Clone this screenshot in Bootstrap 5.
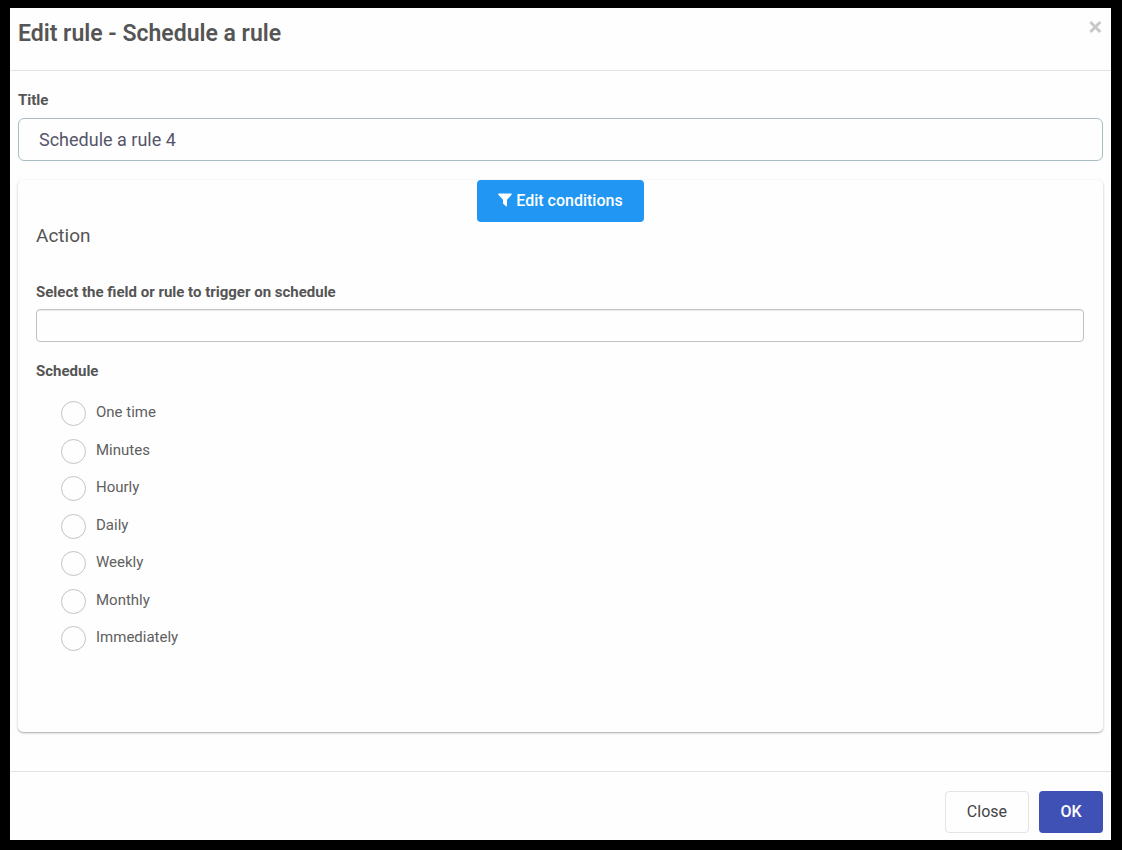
<!DOCTYPE html>
<html lang="en">
<head>
<meta charset="utf-8">
<meta name="viewport" content="width=device-width, initial-scale=1">
<title>Edit rule - Schedule a rule</title>
<link href="https://cdn.jsdelivr.net/npm/bootstrap@5.3.0/dist/css/bootstrap.min.css" rel="stylesheet">
<style>
  body { background: #000; color: #555; font-family: Roboto, "Liberation Sans", sans-serif; font-size: 15px; line-height: 20px; padding: 8px 11px 10px 10px; }
  .dialog { background: #fefefe; min-height: calc(100vh - 18px); }
  .dialog-head { padding: 10px 8px 20px; border-bottom: 1px solid #e1e3e3; }
  .dialog-title { font-size: 23px; line-height: 32px; font-weight: 600; }
  .dialog-close { width: 16px; height: 18px; color: #c8c8c8; line-height: 0; }
  .dialog-main { padding: 19px 8px 39px; }
  .dialog-foot { padding: 19px 8px 7px; gap: 10px; border-top: 1px solid #e1e3e3; }
  .field-name { font-weight: 700; }
  .title-box { height: 43px; margin: 8px 0 19px; padding: 0 20px; font-size: 18px; color: #55556a; border: 1px solid #a9bdc3; border-radius: 6px; background: #fefefe; }
  .panel { padding-bottom: 81px; border-radius: 5px; background: #fefefe; box-shadow: 0 1px 3px rgba(0,0,0,.2), 0 1px 1px rgba(0,0,0,.16); }
  .panel-body { padding: 0 19px 0 18px; }
  .action-title { font-size: 19px; line-height: 28px; margin-bottom: 32px; font-weight: 400; }
  .target-box { height: 33px; margin: 7px 0 19px; border: 1px solid #c2c2c2; border-radius: 4px; background: #fefefe; box-shadow: inset 0 1px 1px rgba(0,0,0,.08); }
  .btn { height: 42px; min-width: 64px; padding: 0 21px; font-size: 16px; line-height: 24px; border-radius: 4px; }
  .btn-filter { background: #2196f3; color: #fff; font-weight: 500; }
  .btn-filter svg { vertical-align: -1px; }
  .btn-plain { border: 1px solid #e4e4e4; color: #444; background: #fefefe; }
  .btn-accept { background: #3f51b5; color: #fff; font-weight: 500; }
  .choices { height: 250px; margin-top: 20px; padding-left: 25px; }
  .choice { gap: 10px; height: 25px; }
  .choice input { width: 25px; height: 25px; margin: 0; border: 1px solid #c4c4c4; background-color: #fefefe; }
  .choice label { line-height: 22px; color: #606060; }
</style>
</head>
<body>
<div class="dialog d-flex flex-column" role="dialog" aria-labelledby="dialogTitle">
  <header class="dialog-head d-flex justify-content-between align-items-start">
    <h1 class="dialog-title m-0" id="dialogTitle">Edit rule - Schedule a rule</h1>
    <button type="button" class="dialog-close border-0 bg-transparent p-0" aria-label="Close dialog">
      <svg width="16" height="18" viewBox="0 0 16 18"><path d="M3.300 4l10 10M13.300 4l-10 10" stroke="currentColor" stroke-width="3"/></svg>
    </button>
  </header>
  <main class="dialog-main flex-grow-1">
    <label class="field-name d-block" for="ruleTitle">Title</label>
    <input class="title-box d-block w-100" type="text" id="ruleTitle" value="Schedule a rule 4">
    <section class="panel">
      <div class="text-center">
        <button type="button" class="btn btn-filter border-0"><svg width="14" height="14" viewBox="0 0 14 14" fill="currentColor" aria-hidden="true"><path d="M.8 .6h12.400q1 .3.4 1.200L9 6.800v6q-.2 1-1 .5L5.200 10.800Q5 10.600 5 10.200V6.800L.4 1.800Q-.2.9.8.6z"/></svg> Edit conditions</button>
      </div>
      <div class="panel-body">
        <h2 class="action-title">Action</h2>
        <label class="field-name d-block" for="target">Select the field or rule to trigger on schedule</label>
        <input class="target-box d-block w-100" type="text" id="target">
        <div class="field-name" id="scheduleName">Schedule</div>
        <div class="choices d-flex flex-column justify-content-between" role="radiogroup" aria-labelledby="scheduleName">
          <div class="choice d-flex"><input class="form-check-input" type="radio" name="schedule" id="once"><label for="once">One time</label></div>
          <div class="choice d-flex"><input class="form-check-input" type="radio" name="schedule" id="minutes"><label for="minutes">Minutes</label></div>
          <div class="choice d-flex"><input class="form-check-input" type="radio" name="schedule" id="hourly"><label for="hourly">Hourly</label></div>
          <div class="choice d-flex"><input class="form-check-input" type="radio" name="schedule" id="daily"><label for="daily">Daily</label></div>
          <div class="choice d-flex"><input class="form-check-input" type="radio" name="schedule" id="weekly"><label for="weekly">Weekly</label></div>
          <div class="choice d-flex"><input class="form-check-input" type="radio" name="schedule" id="monthly"><label for="monthly">Monthly</label></div>
          <div class="choice d-flex"><input class="form-check-input" type="radio" name="schedule" id="immediately"><label for="immediately">Immediately</label></div>
        </div>
      </div>
    </section>
  </main>
  <footer class="dialog-foot d-flex justify-content-end">
    <button type="button" class="btn btn-plain">Close</button>
    <button type="button" class="btn btn-accept border-0">OK</button>
  </footer>
</div>
<script src="https://cdn.jsdelivr.net/npm/bootstrap@5.3.0/dist/js/bootstrap.bundle.min.js"></script>
</body>
</html>
